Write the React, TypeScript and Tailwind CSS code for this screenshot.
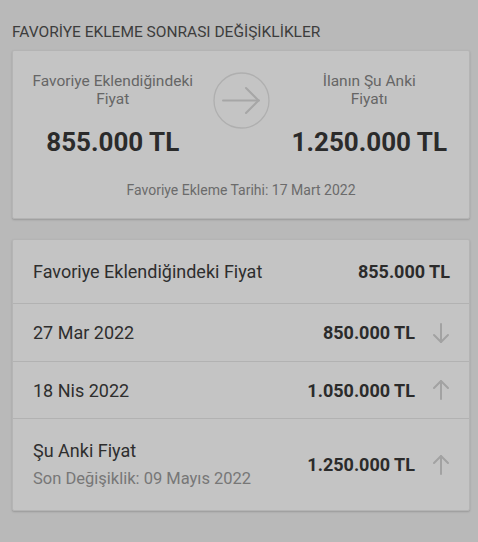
import React from 'react';

const font = { fontFamily: 'Roboto, "Noto Sans", sans-serif' };

const Arrow = ({ dir }: { dir: 'up' | 'down' }) => (
  <svg
    width="18"
    height="22"
    viewBox="0 0 18 22"
    fill="none"
    stroke="#a2a2a2"
    strokeWidth="2"
    strokeLinecap="round"
    strokeLinejoin="round"
    className={dir === 'up' ? 'rotate-180' : ''}
  >
    <path d="M9 2v18" />
    <path d="M2 13l7 7 7-7" />
  </svg>
);

const rows = [
  { date: '27 Mar 2022', price: '850.000 TL', dir: 'down' as const },
  { date: '18 Nis 2022', price: '1.050.000 TL', dir: 'up' as const },
];

export default function App() {
  return (
    <div className="min-h-[542px] w-full bg-[#b9b9b9] pl-[12px] pr-[8px] pt-[22px]" style={font}>
      <div className="text-[15.5px] leading-[20px] text-[#3d3d3d]">FAVORİYE EKLEME SONRASI DEĞİŞİKLİKLER</div>

      {/* summary card */}
      <div className="mt-[8px] rounded-[2px] border border-[#b4b4b4] bg-[#c4c4c4] pt-[21px] pb-[18px] shadow-[0_1px_2px_rgba(0,0,0,0.18)]">
        <div className="grid grid-cols-[1fr_57px_1fr]">
          <div className="flex flex-col items-center">
            <div className="text-center text-[15.5px] leading-[18px] text-[#666]">
              Favoriye Eklendiğindeki
              <br />
              Fiyat
            </div>
            <div className="mt-[19px] text-[26px] font-bold leading-[30px] text-[#2b2b2b]">855.000 TL</div>
          </div>
          <div>
            <svg width="57" height="57" viewBox="0 0 57 57" fill="none">
              <circle cx="28.5" cy="28.5" r="27.5" stroke="#afafaf" strokeWidth="1.3" />
              <path d="M10 28.5h36" stroke="#a6a6a6" strokeWidth="2" strokeLinecap="round" />
              <path d="M33 16l12.5 12.5L33 41" stroke="#a6a6a6" strokeWidth="2" strokeLinecap="round" strokeLinejoin="round" />
            </svg>
          </div>
          <div className="flex flex-col items-center">
            <div className="text-center text-[15.5px] leading-[18px] text-[#666]">
              İlanın Şu Anki
              <br />
              Fiyatı
            </div>
            <div className="mt-[19px] text-[26px] font-bold leading-[30px] text-[#2b2b2b]">1.250.000 TL</div>
          </div>
        </div>
        <div className="mt-[23px] text-center text-[14px] leading-[20px] text-[#6b6b6b]">
          Favoriye Ekleme Tarihi: 17 Mart 2022
        </div>
      </div>

      {/* history card */}
      <div className="mt-[20px] rounded-[2px] border border-[#b4b4b4] bg-[#c4c4c4] shadow-[0_1px_2px_rgba(0,0,0,0.18)]">
        <div className="flex h-[64px] items-center justify-between border-b border-[#b2b2b2] pl-[20px] pr-[19px]">
          <span className="text-[18px] text-[#2e2e2e]">Favoriye Eklendiğindeki Fiyat</span>
          <span className="text-[18px] font-bold text-[#2b2b2b]">855.000 TL</span>
        </div>
        {rows.map((r, i) => (
          <div
            key={r.date}
            className={`flex items-center justify-between border-b border-[#b2b2b2] pl-[20px] pr-[19px] ${i === 0 ? 'h-[58px]' : 'h-[57px]'}`}
          >
            <span className="text-[18px] text-[#2e2e2e]">{r.date}</span>
            <div className="flex items-center gap-[17px]">
              <span className="text-[18px] font-bold text-[#2b2b2b]">{r.price}</span>
              <Arrow dir={r.dir} />
            </div>
          </div>
        ))}
        <div className="flex h-[91px] items-center justify-between pl-[20px] pr-[19px]">
          <div className="flex flex-col">
            <span className="text-[18px] leading-[24px] text-[#2e2e2e]">Şu Anki Fiyat</span>
            <span className="mt-[5px] text-[16.5px] leading-[22px] text-[#777]">Son Değişiklik: 09 Mayıs 2022</span>
          </div>
          <div className="flex items-center gap-[17px]">
            <span className="text-[18px] font-bold text-[#2b2b2b]">1.250.000 TL</span>
            <Arrow dir="up" />
          </div>
        </div>
      </div>
    </div>
  );
}
